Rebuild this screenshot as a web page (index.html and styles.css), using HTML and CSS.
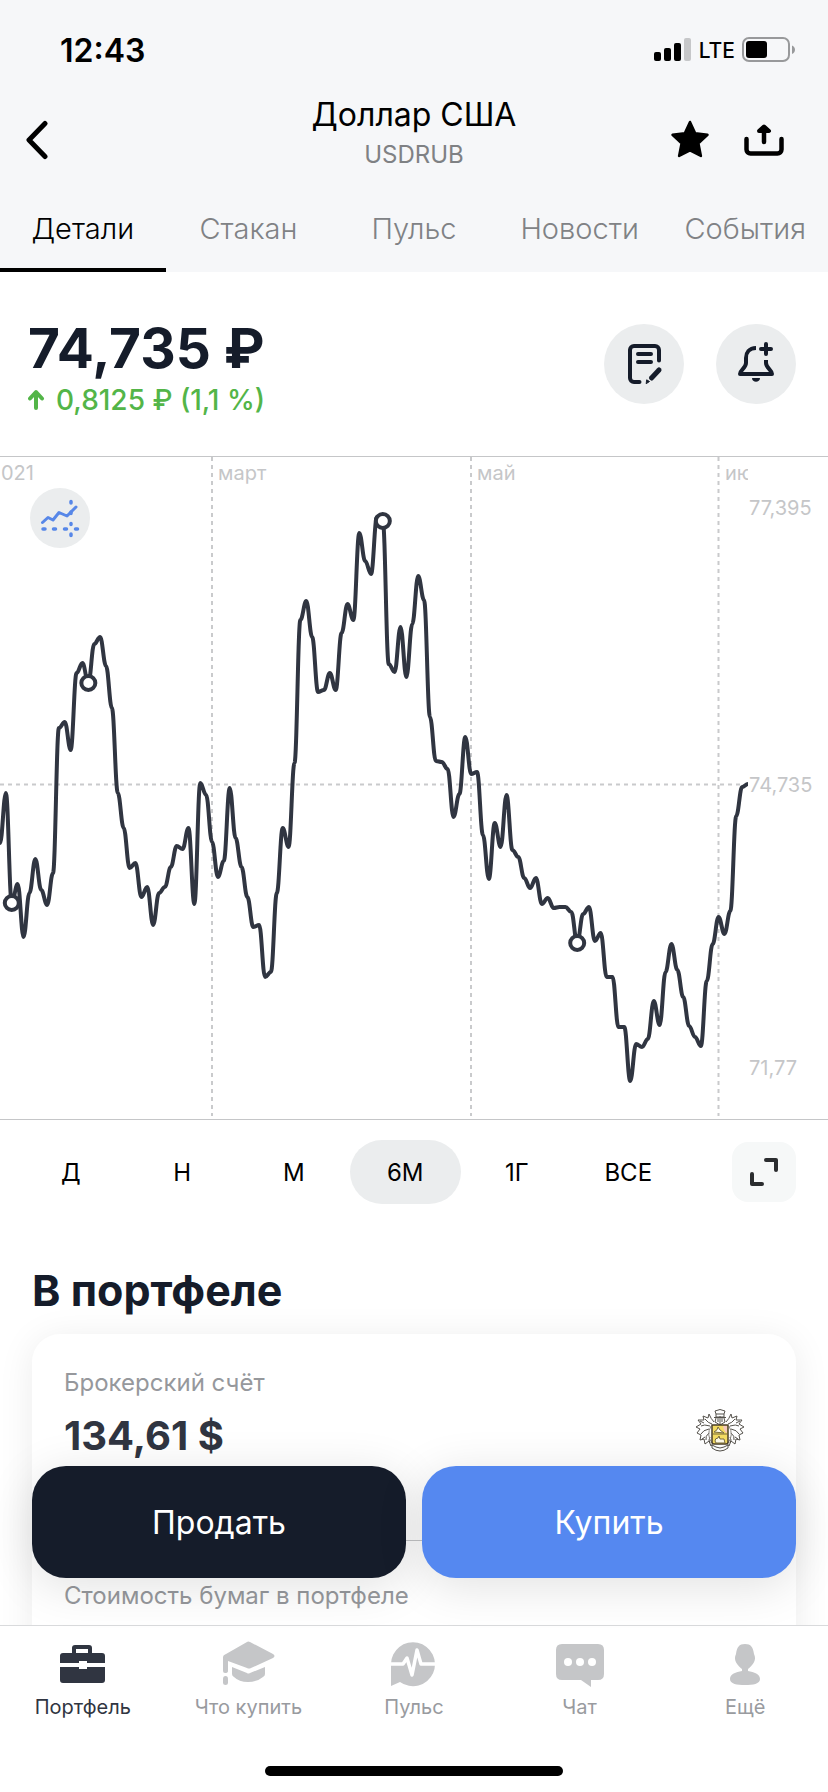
FILE: index.html
```html
<!DOCTYPE html>
<html lang="ru">
<head>
<meta charset="utf-8">
<meta name="viewport" content="width=device-width, initial-scale=1">
<title>Доллар США</title>
<link rel="stylesheet" href="styles.css">
</head>
<body>
<div class="app">
  <header class="header">
    <div class="status">
      <span class="status-time">12:43</span>
      <div class="status-right">
        <svg width="38" height="24" viewBox="0 0 38 24" aria-hidden="true">
          <rect x="0" y="14" width="7" height="9" rx="2"/>
          <rect x="10" y="10" width="7" height="13" rx="2"/>
          <rect x="20" y="5" width="7" height="18" rx="2"/>
          <rect x="30" y="0" width="7" height="23" rx="2" fill="#c6c7c9"/>
        </svg>
        <span class="status-net">LTE</span>
        <svg width="54" height="26" viewBox="0 0 54 26" aria-hidden="true">
          <rect x="1" y="1" width="46" height="23" rx="6" fill="none" stroke="#98999b" stroke-width="2"/>
          <rect x="4" y="4" width="21" height="17" rx="3"/>
          <path d="M50 8.500c4 1.500 4 7 0 8.500z" fill="#98999b"/>
        </svg>
      </div>
    </div>
    <div class="titlebar">
      <button class="icon-btn back" aria-label="Назад">
        <svg width="24" height="40" viewBox="0 0 24 40" aria-hidden="true"><path d="M21 3.500 5 20l16 16.500" fill="none" stroke="#000" stroke-width="5" stroke-linecap="round" stroke-linejoin="round"/></svg>
      </button>
      <div class="titles">
        <h1 class="title">Доллар США</h1>
        <p class="subtitle">USDRUB</p>
      </div>
      <div class="title-actions">
        <button class="icon-btn" aria-label="В избранное">
          <svg width="40" height="40" viewBox="0 0 40 40" aria-hidden="true"><path d="M20 2l5.200 11.300 12.300 1.500-9.100 8.500 2.500 12.700L20 30.500 9.100 36l2.500-12.700-9.100-8.500 12.300-1.500z" stroke="#000" stroke-width="2.500" stroke-linejoin="round"/></svg>
        </button>
        <button class="icon-btn" aria-label="Поделиться">
          <svg width="40" height="40" viewBox="0 0 40 40" aria-hidden="true"><path d="M2.500 19v10.500a4 4 0 0 0 4 4h27a4 4 0 0 0 4-4V19M20 22V9" fill="none" stroke="#000" stroke-width="4.500" stroke-linecap="round"/><path d="M15 11l5-4.500L25 11z" stroke="#000" stroke-width="4" stroke-linejoin="round"/></svg>
        </button>
      </div>
    </div>
    <nav class="tabs" aria-label="Разделы">
      <a class="tab tab-active" href="#details">Детали</a>
      <a class="tab" href="#book">Стакан</a>
      <a class="tab" href="#pulse">Пульс</a>
      <a class="tab" href="#news">Новости</a>
      <a class="tab" href="#events">События</a>
    </nav>
  </header>

  <main class="content" id="details">
    <section class="quote">
      <div class="quote-values">
        <p class="price">74,735 ₽</p>
        <p class="change">
          <svg width="20" height="24" viewBox="0 0 20 24" aria-hidden="true"><path d="M8 20V5M2 10.500 8 4l6 6.500" fill="none" stroke="#53b548" stroke-width="4" stroke-linecap="round" stroke-linejoin="round"/></svg>
          <span>0,8125 ₽ (1,1 %)</span>
        </p>
      </div>
      <div class="quote-actions">
        <button class="round-btn" aria-label="Заявка">
          <svg width="80" height="80" viewBox="0 0 80 80" aria-hidden="true" fill="none" stroke="#151c2a" stroke-width="4" stroke-linecap="round" stroke-linejoin="round">
            <path d="M55 36.500V26a4 4 0 0 0-4-4H30a4 4 0 0 0-4 4v28a4 4 0 0 0 4 4h5.500M34 30h13M34 38h13"/>
            <path d="M47.500 54 55 46" stroke-width="5"/><path d="M43 56l2.500 1.500L42.500 59.500z" fill="#151c2a" stroke-width="1"/>
          </svg>
        </button>
        <button class="round-btn" aria-label="Добавить уведомление">
          <svg width="80" height="80" viewBox="0 0 80 80" aria-hidden="true" fill="none" stroke="#151c2a" stroke-width="4" stroke-linecap="round" stroke-linejoin="round">
            <path d="M40 24c-7 0-10 5-10 10v5c0 5-6 7-6 11h32c0-4-6-6-6-11v-3" stroke-linecap="butt"/>
            <path d="M50 20v10M45 25h10"/><path d="M36 54h8c0 5-8 5-8 0z" fill="#151c2a" stroke="none"/>
          </svg>
        </button>
      </div>
    </section>

    <section class="chart-box">
      <svg class="chart" viewBox="0 0 828 662" role="img" aria-label="График курса за шесть месяцев">
        <defs><clipPath id="plot"><rect x="0" y="0" width="748" height="662"/></clipPath></defs>
        <g class="grid">
          <path d="M212 0v659M471 0v659M718.500 0v659M0 327.500h742"/>
        </g>
        <g class="axis">
          <text x="1" y="23">021</text>
          <text x="218" y="23">март</text>
          <text x="477" y="23">май</text>
          <text x="725" y="23" clip-path="url(#plot)">ию</text>
          <text x="749" y="58">77,395</text>
          <text x="749" y="335">74,735</text>
          <text x="749" y="618">71,77</text>
        </g>
        <path id="line" class="line" clip-path="url(#plot)"/>
        <g id="marks" class="marks"></g>
      </svg>
      <button class="indicator-btn" aria-label="Индикаторы">
        <svg width="60" height="60" viewBox="0 0 60 60" aria-hidden="true" fill="none" stroke="#5787e8" stroke-linecap="round">
          <path d="M12.500 34.500 18 29.500l5 2.500 6-7.500 8 3.500 9-9" stroke-width="3" stroke-linejoin="round"/>
          <path d="M13 41h2M23.500 41h2M34.500 41h2M45.500 41h2M41 13.500v1.500M41 24v1.500M41 35.500v1M41 46v1.500" stroke-width="3.500"/>
        </svg>
      </button>
    </section>

    <section class="ranges">
      <div class="range-list">
        <button class="range">Д</button>
        <button class="range">Н</button>
        <button class="range">М</button>
        <button class="range range-active">6М</button>
        <button class="range">1Г</button>
        <button class="range">ВСЕ</button>
      </div>
      <button class="expand" aria-label="На весь экран">
        <svg width="28" height="28" viewBox="0 0 28 28" aria-hidden="true"><path d="M16 2h10v10M2 16v10h10" fill="none" stroke="#2b2d2f" stroke-width="4" stroke-linecap="round" stroke-linejoin="round"/></svg>
      </button>
    </section>

    <section class="portfolio">
      <h2 class="section-title">В портфеле</h2>
      <div class="card">
        <div class="account">
          <div>
            <p class="label">Брокерский счёт</p>
            <p class="amount">134,61 $</p>
          </div>
          <svg class="crest" width="48" height="44" viewBox="0 0 48 44" aria-hidden="true" fill="none" stroke="#55524c" stroke-width="1" stroke-linejoin="round">
            <path d="M19 3q5-3 10 0l-1 3h-8zM20 6v3h8V6M18 9.500h12M20 10l-1 4 5 3 5-3-1-4M22 10v4M26 10v4M24 8v9"/>
            <path d="M18 14q-3-3-5-8l-1 4-5-2 1 4-6 0 3 4-5 3 4 2-3 4 4 2-1 5 4-1 1 5 4-3 2 5 2-3M16 16q-4-1-7-5M14 18q-6-2-9 0M13 21q-6 1-8 5M13 25q-4 3-3 7M14 29q-2 3 0 6M4 13l4 2M6 31l3-2"/>
            <path d="M30 14q3-3 5-8l1 4 5-2-1 4 6 0-3 4 5 3-4 2 3 4-4 2 1 5-4-1-1 5-4-3-2 5-2-3M32 16q4-1 7-5M34 18q6-2 9 0M35 21q6 1 8 5M35 25q4 3 3 7M34 29q2 3 0 6M44 13l-4 2M42 31l-3-2"/>
            <path d="M15 18q-5 9 1 17M33 18q5 9-1 17" stroke="#8b8780"/>
            <path d="M16 17h16v17q0 2-2 2h-12q-2 0-2-2z" fill="#f4dc63" stroke="#493e2a" stroke-width="1.500"/>
            <path d="M27 18h4v7q-3-1-4-7z" fill="#f5c8bd" stroke="none"/>
            <path d="M17 26h14M18 24q4-2 4-5l2 3 4 3zM19 33q0-3 3-3l1-2 1 3h4l1 4h-9z" fill="#fffbe8" stroke="#796b3d"/>
            <path d="M16 37l4 2q4 2 8 0l4-2v3q-8 6-16 0z" fill="#fff"/>
          </svg>
        </div>
        <hr class="divider">
        <p class="label">Стоимость бумаг в портфеле</p>
      </div>
    </section>
  </main>

  <footer class="footer">
    <div class="trade">
      <button class="trade-btn sell">Продать</button>
      <button class="trade-btn buy">Купить</button>
    </div>
    <nav class="nav" aria-label="Основное меню">
      <a class="nav-item nav-active" href="#portfolio">
        <svg width="56" height="48" viewBox="0 0 56 48" aria-hidden="true"><path fill-rule="evenodd" d="M17 12V7q0-3 3-3h14q3 0 3 3v5h10q3 0 3 3v7H32v-2h-8v2H5v-7q0-3 3-3zM21 8v4h12V8zM5 26h19v2h8v-2h18v13q0 3-3 3H8q-3 0-3-3z"/></svg>
        <span>Портфель</span>
      </a>
      <a class="nav-item" href="#buy">
        <svg width="56" height="48" viewBox="0 0 56 48" aria-hidden="true"><path d="M27 1q1-1 3 0l23 12q3 2 0 4L31 27q-2 1-4 0L8 20v10q0 2-3 2-2 0-2-2V16q0-2 3-3zM12 26l15 6q1 1 3 0l15-6v7q0 2-2 3-6 5-15 5-9 0-14-5-2-1-2-3z"/><path d="M5.500 35Q8 35 8 38v4q0 2-2.500 2T3 42v-4q0-3 2.500-3z"/></svg>
        <span>Что купить</span>
      </a>
      <a class="nav-item" href="#feed">
        <svg width="56" height="48" viewBox="0 0 56 48" aria-hidden="true"><path d="M5 45V23a22 22 0 1 1 9 18z"/><path d="M4 23h13l4-6 5 17 5-25 4 14h16" fill="none" stroke="#fff" stroke-width="3.500" stroke-linejoin="round"/></svg>
        <span>Пульс</span>
      </a>
      <a class="nav-item" href="#chat">
        <svg width="56" height="48" viewBox="0 0 56 48" aria-hidden="true"><path d="M10 3h36q6 0 6 6v24q0 6-6 6h-7v7l-10-7H10q-6 0-6-6V9q0-6 6-6z"/><g fill="#fff"><circle cx="16" cy="21" r="4"/><circle cx="28" cy="21" r="4"/><circle cx="40" cy="21" r="4"/></g></svg>
        <span>Чат</span>
      </a>
      <a class="nav-item" href="#more">
        <svg width="56" height="48" viewBox="0 0 56 48" aria-hidden="true"><path d="M28 3c6 0 8 3 9 10 3 6-1 11-6 15v2c6 1 12 3 12 8s-7 6-15 6-15-1-15-6 6-7 12-8v-2c-5-4-9-9-6-15 1-7 3-10 9-10z"/></svg>
        <span>Ещё</span>
      </a>
    </nav>
    <div class="home-bar"></div>
  </footer>
</div>
<script src="chart.js"></script>
</body>
</html>
```

FILE: styles.css
```css
* { box-sizing: border-box; }

body {
  margin: 0;
  background: #fff;
  color: #000;
  font-family: Inter, "Noto Sans", sans-serif;
}

h1, h2, p { margin: 0; }

button {
  margin: 0;
  padding: 0;
  border: 0;
  background: none;
  color: inherit;
  font: inherit;
}

a { color: inherit; text-decoration: none; }
svg { display: block; flex: none; }

.app {
  display: flex;
  flex-direction: column;
  height: 100vh;
}

/* Header */
.header { flex: none; background: #f6f7f9; }

.status {
  display: flex;
  justify-content: space-between;
  align-items: center;
  height: 100px;
  padding: 0 32px 0 60px;
}

.status-time { font-size: 32px; font-weight: 600; }
.status-right { display: flex; align-items: center; gap: 7px; }
.status-net { font-size: 21px; font-weight: 500; }

.titlebar {
  display: grid;
  grid-template-columns: 1fr auto 1fr;
  align-items: center;
  height: 80px;
  padding: 0 44px 0 24px;
}

.icon-btn { display: flex; }
.titles { text-align: center; padding-left: 20px; margin-top: -10px; }
.title { font-size: 32px; line-height: 40px; font-weight: 400; }
.subtitle { font-size: 24px; line-height: 40px; color: #7f8184; }
.title-actions { display: flex; justify-content: flex-end; gap: 34px; }

.tabs { display: grid; grid-template-columns: repeat(5, 1fr); height: 92px; }

.tab {
  display: flex;
  align-items: center;
  justify-content: center;
  padding-top: 8px;
  border-bottom: 4px solid transparent;
  color: #808285;
  font-size: 29px;
  font-weight: 300;
}

.tab-active { color: #000; border-bottom-color: #000; }

/* Content */
.content { flex: 1; min-height: 0; overflow: hidden; }

.quote {
  display: flex;
  justify-content: space-between;
  align-items: center;
  height: 184px;
  padding: 0 32px 0 28px;
}

.quote-values { padding-top: 8px; }
.price { color: #151c2a; font-size: 55px; line-height: 64px; font-weight: 700; }

.change {
  display: flex;
  align-items: center;
  gap: 8px;
  color: #53b548;
  font-size: 28px;
  line-height: 40px;
  font-weight: 500;
}

.quote-actions { display: flex; gap: 32px; }
.round-btn { border-radius: 50%; background: #ebedee; }

.chart-box {
  position: relative;
  border-top: 1px solid #c5c6c8;
  border-bottom: 1px solid #c5c6c8;
}

.chart { width: 100%; height: auto; }
.grid { fill: none; stroke: #c9cacc; stroke-width: 2; stroke-dasharray: 4 4; }
.axis { fill: #c5c6c8; font-size: 20px; }
.line { fill: none; stroke: #303541; stroke-width: 4; stroke-linejoin: round; }
.marks { fill: #fff; stroke: #303541; stroke-width: 4; }

.indicator-btn {
  position: absolute;
  top: 31px;
  left: 30px;
  border-radius: 50%;
  background: #ebedee;
}

.ranges {
  display: flex;
  align-items: center;
  justify-content: space-between;
  gap: 48px;
  padding: 20px 32px 20px 15px;
}

.range-list { display: grid; grid-template-columns: repeat(6, 1fr); flex: 1; }
.range { height: 64px; border-radius: 32px; font-size: 24px; font-weight: 400; }
.range-active { background: #ebedee; }

.expand {
  display: flex;
  align-items: center;
  justify-content: center;
  width: 64px;
  height: 60px;
  border-radius: 16px;
  background: #f6f8f8;
}

.portfolio { padding: 36px 32px 0; }
.section-title { color: #151c2a; font-size: 43px; line-height: 60px; font-weight: 700; }

.card {
  height: 600px;
  margin-top: 14px;
  padding: 32px;
  border-radius: 28px;
  background: #fff;
  box-shadow: 0 4px 36px rgba(0, 0, 0, 0.08);
}

.account { display: flex; justify-content: space-between; padding-right: 20px; }
.label { color: #96989c; font-size: 24px; line-height: 34px; }
.amount { margin-top: 12px; color: #303541; font-size: 40px; line-height: 48px; font-weight: 700; }
.crest { margin-top: 42px; }

.divider {
  height: 1px;
  margin: 80px 0 38px;
  border: 0;
  background: #c5c6c8;
}

/* Footer */
.footer { position: relative; flex: none; background: #fff; border-top: 1px solid #d9dadc; }

.trade {
  position: absolute;
  right: 0;
  bottom: 100%;
  left: 0;
  display: grid;
  grid-template-columns: 1fr 1fr;
  gap: 16px;
  padding: 0 32px 48px;
}

.trade-btn {
  height: 112px;
  border-radius: 34px;
  color: #fff;
  font-size: 32px;
  box-shadow: 0 8px 48px rgba(0, 0, 0, 0.12);
}

.sell { background: #151c2a; }
.buy { background: #5588f0; }

.nav { display: grid; grid-template-columns: repeat(5, 1fr); padding-top: 15px; }

.nav-item {
  display: flex;
  flex-direction: column;
  align-items: center;
  gap: 3px;
  color: #999b9f;
  font-size: 20px;
  line-height: 30px;
}

.nav-item svg { fill: #c5c6c8; }
.nav-active { color: #303541; }
.nav-active svg { fill: #303541; }

.home-bar {
  width: 36%;
  height: 10px;
  margin: 44px auto 16px;
  border-radius: 5px;
  background: #000;
}
```

FILE: chart.js
```js
// Vertical positions of the rate, evenly spaced over the plot width.
const points = [
  387, 337, 447, 428, 481, 437, 403, 434, 449, 417, 272, 266, 294, 217, 207, 227,
  188, 181, 210, 252, 337, 372, 412, 407, 441, 431, 469, 437, 431, 411, 390, 393,
  372, 448, 327, 339, 386, 421, 405, 332, 382, 411, 441, 471, 469, 521, 516, 437,
  372, 391, 307, 164, 145, 181, 236, 234, 217, 234, 177, 148, 164, 77, 105, 118,
  61, 65, 208, 216, 171, 221, 168, 120, 144, 261, 305, 306, 313, 361, 338, 281,
  318, 316, 379, 423, 367, 391, 339, 394, 401, 422, 432, 422, 448, 442, 452, 451,
  451, 456, 487, 458, 451, 485, 477, 521, 521, 571, 571, 625, 588, 591, 583, 545,
  569, 516, 488, 514, 541, 570, 581, 590, 525, 488, 461, 478, 455, 360, 331, 328
].map((y) => y - 1);
const trades = [2, 15, 65, 98];
const step = 748 / (points.length - 1);
const bend = step * 0.4;

let d = `M0 ${points[0]}`;
for (let i = 1; i < points.length; i++) {
  const x0 = (i - 1) * step;
  const x1 = i * step;
  d += `C${x0 + bend} ${points[i - 1]} ${x1 - bend} ${points[i]} ${x1} ${points[i]}`;
}
document.getElementById('line').setAttribute('d', d);

const marks = document.getElementById('marks');
for (const i of trades) {
  const dot = document.createElementNS('http://www.w3.org/2000/svg', 'circle');
  dot.setAttribute('cx', i * step);
  dot.setAttribute('cy', points[i]);
  dot.setAttribute('r', 7);
  marks.append(dot);
}
```
